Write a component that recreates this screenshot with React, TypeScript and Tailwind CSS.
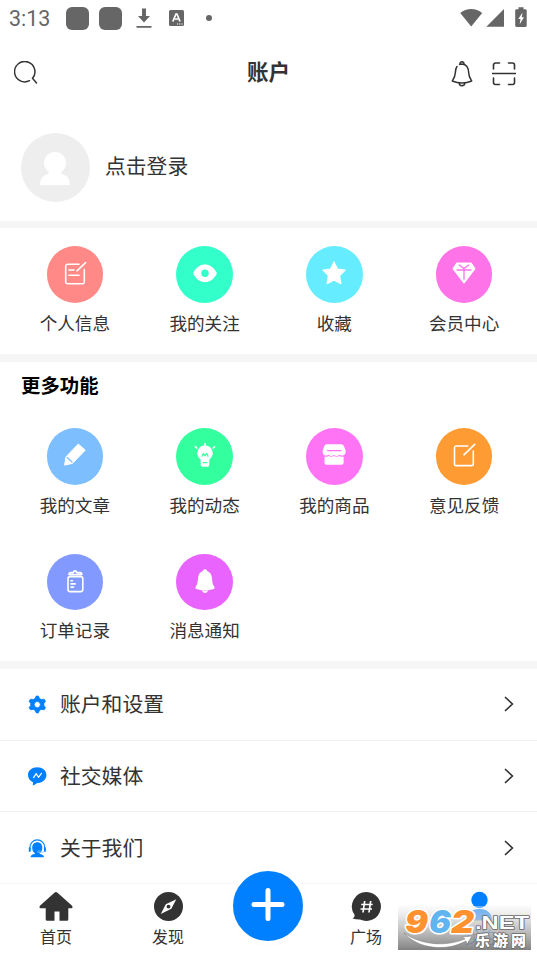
import type { ReactNode } from 'react';

const stroke = {
  fill: 'none',
  stroke: 'currentColor',
  strokeWidth: 1.6,
  strokeLinecap: 'round' as const,
  strokeLinejoin: 'round' as const,
};

const shortcuts = [
  {
    label: '个人信息',
    color: 'bg-[#ff8986]',
    icon: (
      <g {...stroke}>
        <path d="M16 2.2H4.5a1.8 1.8 0 0 0-1.8 1.8v16a1.8 1.8 0 0 0 1.8 1.8h15a1.8 1.8 0 0 0 1.8-1.8V7.5M14 8.8 22.6.6M6 8h5M6 13.2h10" />
      </g>
    ),
  },
  {
    label: '我的关注',
    color: 'bg-[#33ffcb]',
    icon: (
      <path
        fillRule="evenodd"
        fill="currentColor"
        d="M.6 10C3.6 4.900 7.500 2.400 12 2.400S20.400 4.900 23.400 10q.8 1.300 0 2.600C20.400 17.700 16.500 20.200 12 20.200S3.600 17.700.6 12.600q-.8-1.300 0-2.600ZM12 7.600a3.700 3.700 0 1 0 0 7.400 3.700 3.700 0 0 0 0-7.400Z"
      />
    ),
  },
  {
    label: '收藏',
    color: 'bg-[#66ecff]',
    icon: (
      <path
        fill="currentColor"
        stroke="currentColor"
        strokeWidth="1.2"
        strokeLinejoin="round"
        d="m12 0 3.500 7.100 7.600 1.100-5.500 5.500 1.300 7.900-6.900-3.700-6.900 3.700 1.300-7.900L1 8.200l7.600-1.100L12 0Z"
      />
    ),
  },
  {
    label: '会员中心',
    color: 'bg-[#ff73e8]',
    icon: (
      <>
        <path
          fill="currentColor"
          stroke="currentColor"
          strokeLinejoin="round"
          d="M4.700 1h14.600l3.800 5.800L12 21.300.9 6.800 4.700 1Z"
        />
        <path d="m7.300 3 4.700 3.600L16.700 3M5 8h14M12 6.600V17" fill="none" stroke="#ff73e8" strokeWidth="1.300" strokeLinecap="round" />
      </>
    ),
  },
];

const features = [
  {
    label: '我的文章',
    color: 'bg-[#7dbeff]',
    icon: (
      <>
        <path
          fill="currentColor"
          stroke="currentColor"
          strokeLinejoin="round"
          d="M15.300 0 22.200 6.200 9.400 19.400 1.600 21.100 2.900 13 15.300 0Z"
        />
        <path d="m4 13.600 5 4.400" fill="none" stroke="#7dbeff" strokeWidth="1.300" strokeLinecap="round" />
      </>
    ),
  },
  {
    label: '我的动态',
    color: 'bg-[#33ff9f]',
    icon: (
      <>
        <path
          fill="currentColor"
          d="M12 1.500a7.700 7.700 0 0 0-4.900 13.600c.5.4.6 1 .6 1.800v4a1.800 1.800 0 0 0 1.800 1.800h5a1.800 1.800 0 0 0 1.800-1.800v-4c0-.8.1-1.400.6-1.800A7.700 7.700 0 0 0 12 1.500Z"
        />
        <path d="M12-.5v2M2.300 2.700l1.500 1.300M21.700 2.700l-1.500 1.300" {...stroke} />
        <path d="M9 12.200 10.300 9.600 12 11.700 13.700 9.600 15 12.200M10.300 18.700h3.600" fill="none" stroke="#33ff9f" strokeWidth="1.200" strokeLinecap="round" />
      </>
    ),
  },
  {
    label: '我的商品',
    color: 'bg-[#ff73f5]',
    icon: (
      <>
        <path
          fill="currentColor"
          d="M5 .3h14.200a3 3 0 0 1 2.800 2l1.600 4.200c.6 2.800-1 5-3.300 5-1.600 0-2.500-.3-3-.8-.7.800-1.600 1.200-2.700 1.200s-2-.4-2.600-1.200c-.6.800-1.500 1.200-2.600 1.200s-2-.4-2.700-1.200c-.5.5-1.400.8-3 .8-2.300 0-3.500-2.200-3-5l1.500-4.200A3 3 0 0 1 5 .3Z"
        />
        <path
          fill="currentColor"
          d="M2.500 12.400c1.700.5 3.100.3 4.200-.4 1.500 1.100 3.700 1.100 5.300 0 1.600 1.100 3.800 1.100 5.300 0 1.200.7 2.600.9 4.300.4V19a1.800 1.800 0 0 1-1.800 1.800H4.300A1.800 1.800 0 0 1 2.500 19Z"
        />
        <path d="M5.500 6.600h13.500" fill="none" stroke="#ff73f5" strokeWidth="1.200" strokeLinecap="round" />
      </>
    ),
  },
  {
    label: '意见反馈',
    color: 'bg-[#ff9b33]',
    icon: (
      <g {...stroke}>
        <path d="M15.800 2H4.200A1.700 1.700 0 0 0 2.500 3.700v16.200a1.700 1.700 0 0 0 1.700 1.700h15.400a1.700 1.700 0 0 0 1.700-1.700V7M11.900 10.800 22.700.4" />
      </g>
    ),
  },
  {
    label: '订单记录',
    color: 'bg-[#8299ff]',
    icon: (
      <g {...stroke}>
        <rect x="5" y="6.600" width="14.800" height="15" rx="2" />
        <path d="M6 4.600c0-1.300.6-2 1.800-2h2.500c.2-1 .8-1.700 1.700-1.700s1.500.7 1.700 1.700H17c1.200 0 1.800.7 1.800 2H6ZM8 10.800h1.500M8 13.900h4.200M8 17.100h2.500" />
      </g>
    ),
  },
  {
    label: '消息通知',
    color: 'bg-[#e963ff]',
    icon: (
      <>
        <path
          fill="currentColor"
          d="M12-.8c1.300 0 2 .8 2.200 1.800 3.200 1.100 4.600 4 4.800 7.500.2 3.700.8 6 2.400 8.600.5.9.2 1.700-.7 2-2.500.9-5.400 1.500-8.700 1.500s-6.200-.6-8.700-1.500c-.9-.3-1.200-1.100-.7-2 1.600-2.600 2.200-4.900 2.400-8.600.2-3.500 1.600-6.400 4.800-7.500.2-1 .9-1.800 2.200-1.800Z"
        />
        <path d="M9 19.500h6c0 2.200-1.200 3.600-3 3.600s-3-1.400-3-3.600Z" fill="currentColor" />
        <path d="M9.500 20.600c1.600.3 3.400.3 5 0" fill="none" stroke="#e963ff" strokeWidth=".5" />
      </>
    ),
  },
];

const links = [
  {
    label: '账户和设置',
    icon: (
      <path
        fillRule="evenodd"
        stroke="currentColor"
        strokeWidth=".8"
        strokeLinejoin="round"
        d="M8.300 1h2l1.300 2.600 1.600.9 3-.3 1.300 2-1.600 2.300v1.900l1.600 2.300-1.300 2-3-.3-1.600.9-1.300 2.600h-2L7 15.300l-1.600-.9-3 .3-1.300-2 1.600-2.300V8.500L1.100 6.200l1.300-2 3 .3L7 3.600 8.300 1ZM9.300 6.500a3.100 3.100 0 1 0 0 6.200 3.100 3.100 0 0 0 0-6.200Z"
      />
    ),
  },
  {
    label: '社交媒体',
    icon: (
      <>
        <path d="M9.200.3c5.200 0 9.200 3.300 9.200 7.600 0 4.700-4.400 8.200-9.200 8.200-1.300 1.100-2.700 1.900-4.500 2.300.3-1.200.4-2.200.1-3.300C1.900 13.700 0 11.200 0 7.900 0 3.600 4 .3 9.200.3Z" />
        <path d="m5.600 10.600 2.600-4 2.300 3.700 2.900-4" fill="none" stroke="white" strokeWidth="1.200" strokeLinecap="round" strokeLinejoin="round" />
      </>
    ),
  },
  {
    label: '关于我们',
    icon: (
      <>
        <path d="M1.900 11.500V8.300a7.400 7.400 0 0 1 14.800 0v3.200" fill="none" stroke="currentColor" strokeWidth="1.200" />
        <path d="M.8 8.500h1.800v4.200H.8zM16 8.500h1.800v4.200H16z" />
        <path d="M9.300 3.200c3 0 5 2.200 5 5.300 0 2.700-1 4.700-2.600 5.600v1c2.500.4 4 1.100 4.300 3.100H2.500c.3-2 1.900-2.700 4.300-3.100v-1c-1.600-.9-2.600-2.900-2.600-5.600 0-3.100 2.100-5.300 5.100-5.300Z" />
        <path d="M16.500 12c-.8 1.200-2 1.400-3.500 1.400h-2.700c-1 0-1-1.500 0-1.500h2.200" fill="none" stroke="#8cc6ff" strokeWidth=".8" />
      </>
    ),
  },
];

function Shortcut({ label, color, icon }: { label: string; color: string; icon: ReactNode }) {
  return (
    <button className="flex flex-col items-center">
      <span className={`flex h-[56.600px] w-[56.600px] items-center justify-center rounded-full text-white ${color}`}>
        <svg width="24" height="24" viewBox="0 0 24 24" className="overflow-visible">
          {icon}
        </svg>
      </span>
      <span className="mt-[7px] text-[17.600px] leading-[26px]">{label}</span>
    </button>
  );
}

function StatusBar() {
  return (
    <div className="flex h-9 shrink-0 items-center justify-between pl-[9px] pr-[10px] text-[#666]">
      <div className="flex h-full items-center">
        <span className="w-[57px] pt-[2px] font-[Roboto] text-[21.500px] leading-none">3:13</span>
        <span className="h-[23px] w-[23px] rounded-[6px] bg-[#666]" />
        <span className="ml-[10px] h-[23px] w-[23px] rounded-[6px] bg-[#666]" />
        <svg width="16" height="22" viewBox="0 0 16 22" className="ml-[14px]" fill="currentColor">
          <path d="M6 1.500h4v7.500h4l-6 6.500L2 9h4zM.5 19h15v1.800H.5z" />
        </svg>
        <svg width="15" height="16" viewBox="0 0 15 16" className="ml-[17px]">
          <rect width="15" height="16" rx="1.500" fill="currentColor" />
          <path d="M3.800 11.500 7 4h1l3 7.500M5 9h5" fill="none" stroke="white" strokeWidth="1.700" />
          <path d="M8 14h1.200M10.200 14h1.200M12.400 14h1.200" stroke="white" />
        </svg>
        <span className="ml-[22px] h-[6px] w-[6px] rounded-full bg-[#666]" />
      </div>
      <svg width="67" height="22" viewBox="0 0 67 22" fill="currentColor">
        <path d="M.2 6C6.500.8 15.800.8 22.200 6L11.200 19.500zM26.300 19.800 44 2v17.800z" />
        <path d="M58.500.2h5v2h1.800c.9 0 1.400.6 1.400 1.400v15c0 .9-.5 1.400-1.400 1.400h-8.700c-.9 0-1.400-.5-1.400-1.400v-15c0-.8.5-1.400 1.400-1.400h1.900z" />
        <path d="M62.500 5.500 58.300 12h2.200l-.8 5.300 4.300-7h-2.300z" fill="white" />
      </svg>
    </div>
  );
}

function Header() {
  return (
    <header className="grid h-[72px] shrink-0 grid-cols-[1fr_auto_1fr] items-center pl-[14px] pr-[14px]">
      <svg width="24" height="24" viewBox="0 0 24 24" fill="none" stroke="currentColor" strokeWidth="1.500" strokeLinecap="round" className="mt-px">
        <path d="M15.500 19.700A10.200 10.200 0 1 1 18.500 17.300L22.500 22" />
      </svg>
      <h1 className="mb-[2px] text-[21.500px] font-bold">账户</h1>
      <div className="mr-[7px] flex items-center justify-end gap-[19px]">
        <svg width="22" height="26" viewBox="0 0 22 26" fill="none" stroke="currentColor" strokeWidth="1.500" strokeLinecap="round" strokeLinejoin="round" className="mt-[3px]">
          <path d="M6 5.500c-1.300 1.600-1.600 4-1.700 6.500-.1 3.500-1.500 5.500-3 8 3 1.300 6.200 2 9.700 2s6.700-.7 9.700-2c-1.500-2.500-2.900-4.500-3-8-.1-4.900-1.500-8.500-6.700-9-.9 0-1.700.1-2.400.4" />
          <path d="M9 2.900c-.2-2.800 4.200-2.800 4 0M8.200 22.200c.4 3.400 5.200 3.400 5.600 0" />
        </svg>
        <svg width="24" height="24" viewBox="0 0 24 24" fill="none" stroke="currentColor" strokeWidth="1.600" strokeLinecap="round" className="mt-[3px]">
          <path d="M1.500 7V3a2 2 0 0 1 2-2h4M16.500 1h4a2 2 0 0 1 2 2v4M22.500 16v4.500a2 2 0 0 1-2 2h-4M7.500 22.500h-4a2 2 0 0 1-2-2V16M.5 11.500h23" />
        </svg>
      </div>
    </header>
  );
}

function Tab({ label, children, active }: { label: string; children: ReactNode; active?: boolean }) {
  return (
    <button className={`flex flex-col items-center pt-[7px] ${active ? 'text-[#0080ff]' : 'text-[#333]'}`}>
      <svg width="34" height="32" viewBox="0 0 34 32" fill="currentColor">
        {children}
      </svg>
      <span className="mt-px text-base leading-6">{label}</span>
    </button>
  );
}

function TabBar() {
  return (
    <nav className="grid h-[73px] shrink-0 grid-cols-[112px_112px_86px_112px_115px] border-t border-[#f6f6f6] bg-white">
      <Tab label="首页">
        <path d="M15.700 1.500a1.800 1.800 0 0 1 2.500 0L32.800 14.500c1.300 1.300.8 2.700-.8 2.700h-2.700v11a1.500 1.500 0 0 1-1.500 1.500h-7.300V20.500h-5v9.200H8.200a1.500 1.500 0 0 1-1.500-1.500v-11H2c-1.600 0-2.100-1.400-.8-2.700z" />
      </Tab>
      <Tab label="发现">
        <circle cx="17.500" cy="15.500" r="14.500" />
        <path d="M25.300 8.200 20.300 17.800 9.800 23l5-9.800z" fill="white" />
        <circle cx="17.500" cy="15.600" r="1.900" />
      </Tab>
      <div className="flex items-start justify-center">
        <button className="ml-px mt-[-17px] flex h-[78px] w-[78px] shrink-0 items-center justify-center rounded-full border-4 border-white bg-[#0080ff] shadow-[0_0_0_1px_#fcfcfc]">
          <svg width="34" height="34" viewBox="0 0 34 34" stroke="white" strokeWidth="5" strokeLinecap="round" className="mt-[-2px]">
            <path d="M17 2.500v28M3 16.500h28" />
          </svg>
        </button>
      </div>
      <Tab label="广场">
        <path d="M17.500 1a14.500 14.500 0 1 1-6.500 27.500c-2.200.2-4.700-.3-7.500-.9 1.400-.9 2.300-2.400 2.100-3.700A14.500 14.500 0 0 1 17.500 1Z" />
        <path d="m15.700 10-1.700 11.500M21.700 10 20 21.500M12.200 13.500h11.500M11.500 18H23" fill="none" stroke="white" strokeWidth="1.700" />
      </Tab>
      <Tab label="我的" active>
        <circle cx="16.500" cy="9" r="8.200" />
        <path d="M4 29.500c0-7 4.500-11.500 12.500-11.500s12.500 4.500 12.500 11.500z" />
      </Tab>
    </nav>
  );
}

function Watermark() {
  return (
    <svg width="133" height="44" viewBox="0 0 133 44" className="absolute left-[398px] top-[906px] overflow-visible">
      <defs>
        <linearGradient id="shade" x1="0" y1="0" x2="0" y2="1">
          <stop offset="0" stopColor="#f4f4f4" stopOpacity=".4" />
          <stop offset=".35" stopColor="#ccc" stopOpacity=".75" />
          <stop offset="1" stopColor="#777" stopOpacity=".92" />
        </linearGradient>
      </defs>
      <rect width="133" height="44" fill="url(#shade)" />
      <path d="M6 27c17 12 41 14 61 6l-3-2 10-1-5 8-1-3C48 46 20 43 6 27Z" fill="white" stroke="#777" strokeWidth=".5" />
      <g fontWeight="900" paintOrder="stroke" strokeLinejoin="round">
        <g fontFamily="Inter, sans-serif" fontSize="32" fontStyle="italic" stroke="white" strokeWidth="3">
          <text x="7" y="27" textLength="23" lengthAdjust="spacingAndGlyphs" fill="#ff922e">9</text>
          <text x="31" y="27" textLength="22" lengthAdjust="spacingAndGlyphs" fill="#60b4ef">6</text>
          <text x="53" y="27" textLength="23" lengthAdjust="spacingAndGlyphs" fill="#ff922e">2</text>
        </g>
        <text x="77" y="22.500" fontFamily="Liberation Sans, sans-serif" fontSize="19" textLength="54" lengthAdjust="spacingAndGlyphs" fill="white" stroke="#666" strokeWidth="1.500">
          .NET
        </text>
        <text x="77" y="39.500" fontFamily="Noto Sans CJK SC, sans-serif" fontSize="15" textLength="51" fill="white" stroke="#666" strokeWidth="1.500">
          乐游网
        </text>
      </g>
    </svg>
  );
}

export default function App() {
  return (
    <div className="relative flex h-[956px] w-[537px] flex-col overflow-hidden bg-white font-['Noto_Sans_CJK_SC',sans-serif] text-[#333]">
      <StatusBar />
      <Header />

      <section className="flex h-[113px] shrink-0 items-start pl-[21px] pt-[25px]">
        <span className="flex h-[69px] w-[69px] items-center justify-center rounded-full bg-[#eee]">
          <svg width="32" height="34" viewBox="0 0 32 34" fill="white">
            <circle cx="15" cy="12" r="11" />
            <path d="M9 19h12c-1 3.500 1.500 4 4.500 5.500 3 1.600 4 4.500 4.500 9.500H0c.5-5 1.500-7.900 4.500-9.500C7.500 23 10 22.500 9 19Z" />
          </svg>
        </span>
        <button className="ml-[15px] mt-[17px] text-[20.800px] leading-[30px]">点击登录</button>
      </section>

      <section className="grid h-[141px] shrink-0 grid-cols-4 items-start border-b-[8px] border-t-[7px] border-[#f6f6f6] pl-[10px] pr-2 pt-[18px]">
        {shortcuts.map((item) => (
          <Shortcut key={item.label} {...item} />
        ))}
      </section>

      <section className="h-[307px] shrink-0 border-b-[8px] border-[#f6f6f6]">
        <h2 className="pl-[21px] pt-[9px] text-[19.400px] font-bold leading-7 text-black">更多功能</h2>
        <div className="mt-[29px] grid grid-cols-4 gap-y-9 pl-[10px] pr-2">
          {features.map((item) => (
            <Shortcut key={item.label} {...item} />
          ))}
        </div>
      </section>

      <ul className="min-h-0 flex-1">
        {links.map((link) => (
          <li key={link.label} className="flex h-[71.700px] items-center border-b border-[#f1f1f1] pl-7 pr-[23px] last:border-0">
            <svg width="19" height="19" viewBox="0 0 19 19" fill="currentColor" className="text-[#0080ff]">
              {link.icon}
            </svg>
            <span className="ml-[13px] mt-[-2px] flex-1 text-[20.800px] leading-[30px]">{link.label}</span>
            <svg width="10" height="16" viewBox="0 0 10 16" fill="none" stroke="currentColor" strokeWidth="1.700" strokeLinecap="round" strokeLinejoin="round">
              <path d="m1.500 1.500 7 6.500-7 6.500" />
            </svg>
          </li>
        ))}
      </ul>

      <TabBar />
      <Watermark />
    </div>
  );
}
